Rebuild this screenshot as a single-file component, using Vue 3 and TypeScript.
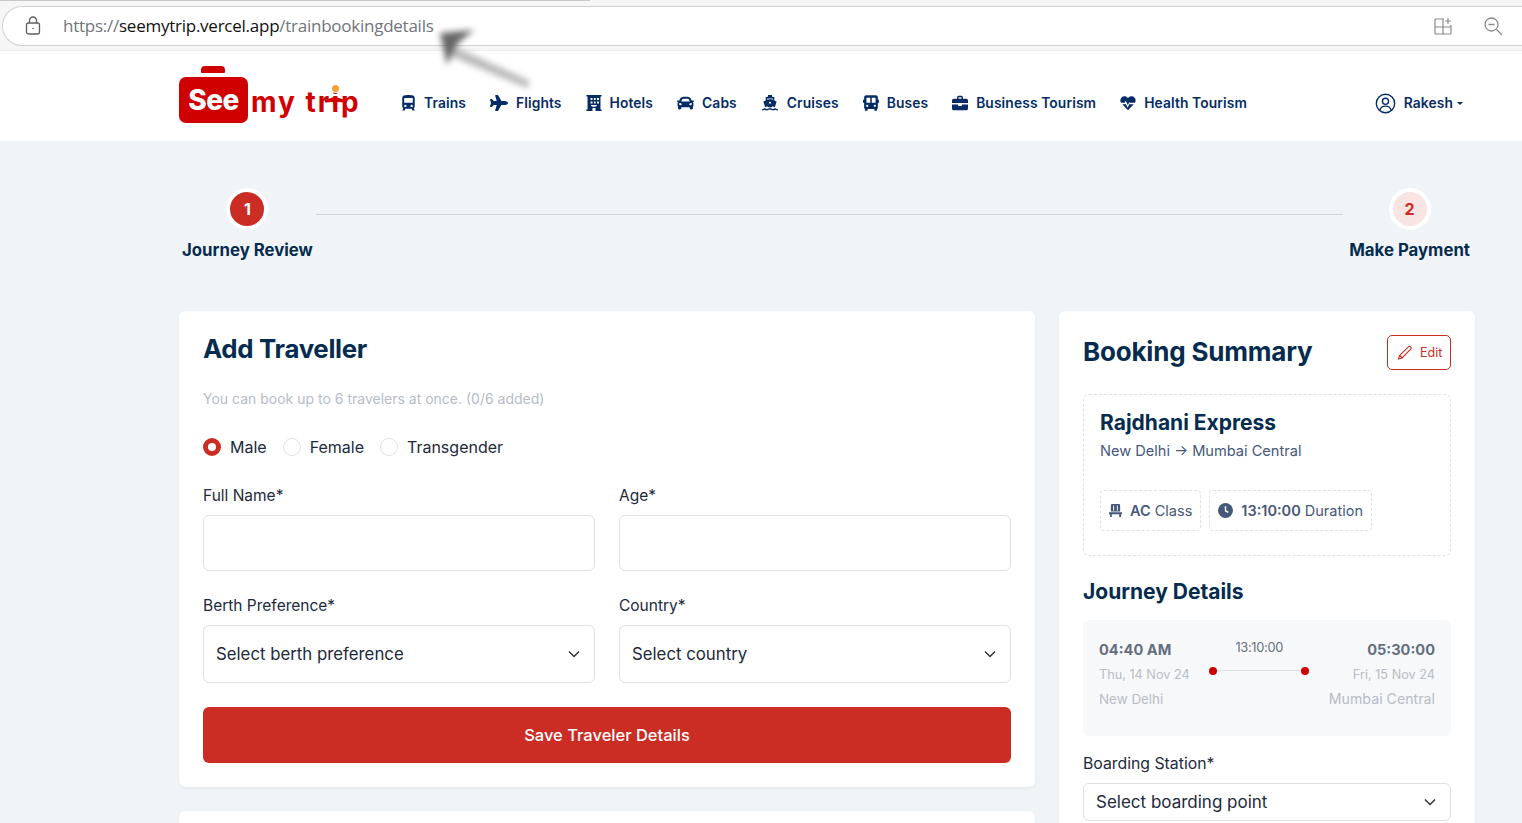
<script setup lang="ts">
interface NavItem { label: string; vb: string; w: number; d: string }
const nav: NavItem[] = [
  { label: 'Trains', vb: '3.500 2 17 20.500', w: 15, d: 'M12 2C7 2 4 2.800 4 6v10.500c0 1 .5 2 1.300 2.400L4 22h3l1-2.500h8l1 2.500h3l-1.300-3.100c.8-.4 1.300-1.400 1.300-2.400V6c0-3.200-3-4-8-4zM6.500 6h11v6h-11V6zM8 17.500a1.500 1.500 0 1 1 0-3 1.500 1.500 0 0 1 0 3zm8 0a1.500 1.500 0 1 1 0-3 1.500 1.500 0 0 1 0 3z' },
  { label: 'Flights', vb: '0 0 576 512', w: 18, d: 'M480 192H365.71L260.61 8.06A16.014 16.014 0 0 0 246.71 0h-65.5c-10.63 0-18.3 10.17-15.38 20.39L214.86 192H112l-43.2-57.6c-3.02-4.03-7.77-6.4-12.8-6.4H16.01C5.6 128-2.04 137.78.49 147.88L32 256 .49 364.12C-2.04 374.22 5.6 384 16.01 384H56c5.04 0 9.78-2.37 12.8-6.4L112 320h102.86l-49.03 171.6c-2.92 10.22 4.75 20.4 15.38 20.4h65.5c5.74 0 11.04-3.08 13.89-8.06L365.71 320H480c35.35 0 96-28.65 96-64s-60.65-64-96-64z' },
  { label: 'Hotels', vb: '2 2 20 21', w: 16, d: 'M2 2h20v2h-1.500v17H22v2h-8v-4h-4v4H2v-2h1.500V4H2V2zm5.500 4v2.500H10V6H7.500zm4.300 0v2.500h2.400V6h-2.400zM16 6v2.500h2.500V6H16zM7.500 10.500V13H10v-2.500H7.500zm4.300 0V13h2.400v-2.500h-2.400zm4.200 0V13h2.500v-2.500H16zM8 15c.5 2 2 2.500 4 2.500s3.500-.5 4-2.500H8z' },
  { label: 'Cabs', vb: '0 40 512 430', w: 17, d: 'M499.99 176h-59.87l-16.64-41.6C406.38 91.63 365.57 64 319.5 64h-127c-46.06 0-86.88 27.63-103.99 70.4L71.87 176H12.01C4.2 176-1.53 183.34.37 190.91l6 24C7.7 220.25 12.5 224 18.01 224h20.07C24.65 235.73 16 252.78 16 272v48c0 16.12 6.16 30.67 16 41.93V416c0 17.67 14.33 32 32 32h32c17.67 0 32-14.33 32-32v-32h256v32c0 17.67 14.33 32 32 32h32c17.67 0 32-14.33 32-32v-54.07c9.84-11.25 16-25.8 16-41.93v-48c0-19.22-8.65-36.27-22.07-48H494c5.51 0 10.31-3.75 11.64-9.09l6-24c1.89-7.57-3.84-14.91-11.65-14.91zm-352.06-17.83c7.29-18.22 24.94-30.17 44.57-30.17h127c19.63 0 37.28 11.95 44.57 30.17L384 208H128l19.93-49.83zM96 319.8c-19.2 0-32-12.76-32-31.9S76.8 256 96 256s48 28.71 48 47.85-28.8 15.95-48 15.95zm320 0c-19.2 0-48 3.19-48-15.95S396.8 256 416 256s32 12.76 32 31.9-12.8 31.9-32 31.9z' },
  { label: 'Cruises', vb: '2 1 20 20.500', w: 18, d: 'M9.500 1h5l.5 2.500h2.500V8l3 1.200-2.200 7.300c-1 .2-1.900-.2-2.800-1-1.200 1-2.500 1.500-3.500 1.500s-2.300-.5-3.500-1.500c-.9.800-1.800 1.200-2.800 1L3.500 9.200l3-1.200V3.500H9l.5-2.500zM8.500 5.500v1.700L12 6l3.500 1.200V5.500h-7zM12 9.500a1.300 1.300 0 1 0 0 2.600 1.300 1.300 0 0 0 0-2.600zM2 19c1.500 0 2.300-.5 3.300-1.300 1.800 1.600 3.800 1.600 5.300.4h2.800c1.500 1.200 3.500 1.200 5.300-.4 1 .8 1.800 1.300 3.300 1.300v2c-1.300 0-2.300-.4-3.300-1-1.800 1.200-3.500 1.200-5.300 0h-3c-1.800 1.200-3.500 1.200-5.300 0-1 .6-2 1-3.100 1v-2z' },
  { label: 'Buses', vb: '1.500 2 21 20.500', w: 16, d: 'M6 2h12c2 0 3 1 3 3v3h1.500v4H21v6c0 1-.5 1.600-1 2v2.500h-3.500V20h-9v2.500H4V20c-.5-.4-1-1-1-2v-6H1.500V8H3V5c0-2 1-3 3-3zm0 3.500V12h5V5.500H6zm7 0V12h5V5.500h-5zM7 17.500a1.500 1.500 0 1 0 0-3 1.500 1.500 0 0 0 0 3zm10 0a1.500 1.500 0 1 0 0-3 1.500 1.500 0 0 0 0 3z' },
  { label: 'Business Tourism', vb: '1 2 22 20', w: 16, d: 'M8 6V4c0-1.100.9-2 2-2h4c1.100 0 2 .9 2 2v2h4.500c1.400 0 2.500 1.100 2.500 2.500V12H1V8.500C1 7.100 2.100 6 3.500 6H8zm2 0h4V4h-4v2zM1 14h8.500v2h5v-2H23v5.500c0 1.400-1.100 2.500-2.500 2.500h-17C2.100 22 1 20.900 1 19.500V14z' },
  { label: 'Health Tourism', vb: '.5 2 23 20.500', w: 16, d: 'M12 5.500C9.500 1.800 5 2 2.800 4.200.6 6.400.5 9.700 2 12h5.200l1.500-3 3 6 2.300-4 .8 1H22c1.500-2.300 1.400-5.600-.8-7.800C19 2 14.500 1.800 12 5.500zM3.800 14 12 22.500l8.200-8.500h-6.100l-.3-.4L11.600 19 8.700 13.300 8.400 14H3.800z' }
]
</script>

<template>
  <div class="root">
    <header class="chrome">
      <div class="tab-edge"></div>
      <div class="urlbar">
        <svg class="lock" viewBox="0 0 18 20" width="18" height="20" fill="none" stroke="#5f5f5f" stroke-width="1.300">
          <rect x="2.500" y="7" width="13" height="11" rx="2" />
          <path d="M5.500 7V4.500a3.500 3.500 0 0 1 7 0V7" />
          <circle cx="9" cy="12.500" r=".8" fill="#5f5f5f" stroke="none" />
        </svg>
        <div class="url"><span class="dim">https://</span><span class="host">seemytrip.vercel.app</span><span class="dim">/trainbookingdetails</span></div>
        <svg class="tool one" viewBox="0 0 20 20" width="20" height="20" fill="none" stroke="#8a8a8a" stroke-width="1.200">
          <path d="M11 3H3a1 1 0 0 0-1 1v13a1 1 0 0 0 1 1h14a1 1 0 0 0 1-1V9" />
          <path d="M10 3v15M2 11h16M15 2v6M12 5h6" />
        </svg>
        <svg class="tool" viewBox="0 0 20 20" width="20" height="20" fill="none" stroke="#8a8a8a" stroke-width="1.300">
          <circle cx="8.500" cy="8.500" r="6.500" />
          <path d="M13.500 13.500 19 19M5.500 8.500h6" />
        </svg>
      </div>
    </header>

    <svg class="smudge" width="110" height="80" viewBox="0 0 110 80">
      <defs><filter id="blur" x="-20%" y="-20%" width="140%" height="140%"><feGaussianBlur stdDeviation="3" /></filter></defs>
      <g filter="url(#blur)">
        <path d="M14 22 L98 60 L95 67 L14 33 Z" fill="#b8b8b8" />
        <path d="M8 12 L42 9 L26 22 L15 44 Z" fill="#666" />
      </g>
    </svg>

    <nav class="topnav">
      <div class="logo">
        <div class="case">
          <span class="handle"></span>
          <span class="see">See</span>
        </div>
        <span class="mytrip">my tr<span class="i">i<b></b><svg class="wing" viewBox="0 0 20 10" width="20" height="10" fill="#d10000"><path d="M0 4 9 1h2l9 3v2.500L12 6l-1 4H9L8 6 0 6.500z" /></svg></span>p</span>
      </div>
      <ul class="links">
        <li v-for="n in nav" :key="n.label">
          <svg :viewBox="n.vb" :width="n.w" height="16" fill="#052c65"><path :d="n.d" /></svg>
          <span>{{ n.label }}</span>
        </li>
      </ul>
      <div class="user">
        <svg viewBox="0 0 24 24" width="21" height="21" fill="none" stroke="#052c65" stroke-width="1.600">
          <circle cx="12" cy="12" r="10.500" />
          <circle cx="12" cy="9.500" r="3.500" />
          <path d="M5.500 19.500c1-3 3.500-4.500 6.500-4.500s5.500 1.500 6.500 4.500" />
        </svg>
        <span>Rakesh</span>
        <i class="caret"></i>
      </div>
    </nav>

    <main class="page">
      <section class="stepper">
        <div class="step">
          <div class="num active">1</div>
          <div class="step-label">Journey Review</div>
        </div>
        <div class="rule"></div>
        <div class="step">
          <div class="num pending">2</div>
          <div class="step-label">Make Payment</div>
        </div>
      </section>

      <div class="columns">
        <div class="left">
          <section class="card form">
            <h2>Add Traveller</h2>
            <p class="hint">You can book up to 6 travelers at once. (0/6 added)</p>
            <div class="radios">
              <label><span class="radio on"></span>Male</label>
              <label><span class="radio"></span>Female</label>
              <label><span class="radio"></span>Transgender</label>
            </div>
            <div class="grid">
              <div class="field">
                <label>Full Name*</label>
                <div class="box tall"></div>
              </div>
              <div class="field">
                <label>Age*</label>
                <div class="box tall"></div>
              </div>
              <div class="field">
                <label>Berth Preference*</label>
                <div class="box sel">
                  <span>Select berth preference</span>
                  <svg viewBox="0 0 12 8" width="12" height="8" fill="none" stroke="#333" stroke-width="1.500"><path d="m1 1.500 5 5 5-5" /></svg>
                </div>
              </div>
              <div class="field">
                <label>Country*</label>
                <div class="box sel">
                  <span>Select country</span>
                  <svg viewBox="0 0 12 8" width="12" height="8" fill="none" stroke="#333" stroke-width="1.500"><path d="m1 1.500 5 5 5-5" /></svg>
                </div>
              </div>
            </div>
            <button class="save" type="button">Save Traveler Details</button>
          </section>
          <section class="card next"></section>
        </div>

        <aside class="card summary">
          <div class="sum-head">
            <h2>Booking Summary</h2>
            <button class="edit" type="button">
              <svg viewBox="0 0 16 16" width="16" height="16" fill="none" stroke="#cb2c23" stroke-width="1.100">
                <path d="M11.300 1.800a1.700 1.700 0 0 1 2.400 2.400L5 13l-3.500 1 1-3.500 8.800-8.700z" />
                <path d="m2.500 10.500 3 2.500" />
              </svg>
              <span>Edit</span>
            </button>
          </div>
          <div class="train">
            <h3>Rajdhani Express</h3>
            <p class="route">New Delhi → Mumbai Central</p>
            <div class="chips">
              <div class="chip">
                <svg viewBox="1 1 14 14" width="13" height="15" fill="#46587a"><path d="M4.500 1h7a1.500 1.500 0 0 1 1.500 1.500V9H3V2.500A1.500 1.500 0 0 1 4.500 1zM5.500 2.500V8h1V2.500h-1zm4 0V8h1V2.500h-1zM1 10h14v2h-1v3h-2v-3H4v3H2v-3H1v-2z" /></svg>
                <span><b>AC</b> Class</span>
              </div>
              <div class="chip">
                <svg viewBox="0 0 16 16" width="15" height="15"><circle cx="8" cy="8" r="8" fill="#46587a" /><path d="M8 3.500V8.300l3 1.800" fill="none" stroke="#fff" stroke-width="1.500" /></svg>
                <span><b>13:10:00</b> Duration</span>
              </div>
            </div>
          </div>
          <h3 class="jd">Journey Details</h3>
          <div class="times">
            <div class="end">
              <strong>04:40 AM</strong>
              <small>Thu, 14 Nov 24</small>
              <small class="place">New Delhi</small>
            </div>
            <div class="track">
              <span class="dur">13:10:00</span>
              <div class="line"><i></i><i></i></div>
            </div>
            <div class="end right">
              <strong>05:30:00</strong>
              <small>Fri, 15 Nov 24</small>
              <small class="place">Mumbai Central</small>
            </div>
          </div>
          <div class="field board">
            <label>Boarding Station*</label>
            <div class="box sel short">
              <span>Select boarding point</span>
              <svg viewBox="0 0 12 8" width="12" height="8" fill="none" stroke="#333" stroke-width="1.500"><path d="m1 1.500 5 5 5-5" /></svg>
            </div>
          </div>
        </aside>
      </div>
    </main>
  </div>
</template>

<style>
html, body { margin: 0; overflow: hidden; }
</style>

<style scoped>
.root {
  position: relative;
  height: 823px;
  width: 1522px;
  overflow: hidden;
  background: #f1f4f7;
  font-family: Inter, "Open Sans", sans-serif;
  color: #222;
}
.chrome { height: 51px; box-sizing: border-box; background: #f6f6f6; border-bottom: 1px solid #f0f0f0; position: relative; padding-top: 6px; }
.tab-edge { position: absolute; top: 0; left: 0; width: 590px; height: 1px; background: #c9c9c9; }
.urlbar {
  height: 40px;
  box-sizing: border-box;
  margin-left: 2px;
  background: #fff;
  border: 1px solid #d0d0d0;
  border-right: 0;
  border-radius: 20px 0 0 20px;
  display: flex;
  align-items: center;
  padding-left: 21px;
}
.url { margin-left: 21px; font-family: "Open Sans", sans-serif; font-size: 17px; letter-spacing: -.25px; flex: 1; white-space: nowrap; margin-top: -1px; }
.dim { color: #71757a; }
.host { color: #111; }
.tool { margin-right: 19px; }
.tool.one { margin-right: 30px; }
.smudge { position: absolute; left: 432px; top: 21px; z-index: 3; }

.topnav { height: 90px; background: #fff; display: flex; align-items: center; padding-left: 179px; box-sizing: border-box; }
.logo { display: flex; align-items: flex-end; width: 222px; height: 57px; margin-top: -4px; flex-shrink: 0; }
.case { position: relative; width: 69px; height: 46px; background: #d10000; border-radius: 7px; display: flex; align-items: center; justify-content: center; }
.handle { position: absolute; left: 22px; top: -11px; width: 24px; height: 7px; border-radius: 4px 4px 1px 1px; background: #d10000; }
.see { color: #fff; font: 800 28px/1 Inter, sans-serif; letter-spacing: -.5px; }
.mytrip { color: #d10000; font: 700 28px/1 Inter, sans-serif; margin: 0 0 7px 3px; white-space: nowrap; letter-spacing: 2px; }
.i { position: relative; }
.i b { position: absolute; left: 1px; top: 0; width: 7px; height: 7px; border-radius: 50%; background: #f6a234; box-shadow: 0 0 0 1px #fff; }
.wing { position: absolute; left: -6px; top: 11px; }
.links { list-style: none; margin: 14px 0 0 0; padding: 0; display: flex; gap: 24px; flex: 1; }
.links li { display: flex; align-items: center; gap: 8px; font-size: 13.800px; font-weight: 600; color: #052c65; white-space: nowrap; letter-spacing: .12px; }
.user { display: flex; align-items: center; gap: 8px; font-size: 13.800px; font-weight: 600; color: #052c65; margin: 14px 59px 0 0; letter-spacing: .1px; }
.caret { margin-left: -4px; border: 3px solid transparent; border-top-color: #052c65; border-bottom: 0; }

.page { padding: 47px 47px 0 179px; }
.stepper { display: flex; align-items: flex-start; margin-right: 5px; height: 123px; }
.step { display: flex; flex-direction: column; align-items: center; gap: 10px; margin-left: 3px; }
.num {
  width: 34px;
  height: 34px;
  border-radius: 50%;
  border: 4px solid #fff;
  display: flex;
  align-items: center;
  justify-content: center;
  font-weight: 700;
  font-size: 16px;
}
.num.active { background: #cb2c23; color: #fff; }
.num.pending { background: #f8e4e3; color: #cb2c23; }
.step-label { font-size: 16.800px; font-weight: 700; color: #052c4f; white-space: nowrap; }
.rule { flex: 1; height: 1px; background: #ced4da; margin: 26px 3px 0; }

.columns { display: flex; gap: 24px; align-items: flex-start; }
.left { width: 856px; flex-shrink: 0; display: flex; flex-direction: column; gap: 24px; }
.card { background: #fff; border-radius: 6px; box-shadow: 0 1px 3px rgba(0, 0, 0, .06); box-sizing: border-box; }
.form { padding: 24px; height: 476px; }
.form h2 { margin: 0; font-size: 25.800px; line-height: 28px; font-weight: 700; color: #052c4f; letter-spacing: -.3px; }
.hint { margin: 26px 0 0; font-size: 14px; line-height: 20px; color: #b7bcc6; }
.radios { display: flex; gap: 16px; margin-top: 28px; height: 20px; align-items: center; }
.radios label { display: flex; align-items: center; gap: 9px; font-size: 16px; color: #212a3a; }
.radio { width: 18px; height: 18px; border-radius: 50%; border: 1px solid #dee2e6; box-sizing: border-box; background: #fff; }
.radio.on { border: 5px solid #cb2c23; }
.grid { display: grid; grid-template-columns: 392px 392px; gap: 24px; margin-top: 28px; }
.field label { display: block; font-size: 15.500px; line-height: 21px; color: #212a3a; margin-bottom: 9px; }
.box { border: 1px solid #dee2e6; border-radius: 6px; background: #fff; box-sizing: border-box; height: 58px; }
.box.tall { height: 56px; }
.sel { display: flex; align-items: center; justify-content: space-between; padding: 0 14px 0 12px; font-size: 16.800px; color: #212a3a; }
.save {
  display: block;
  width: 100%;
  height: 56px;
  margin-top: 24px;
  background: #cb2c23;
  color: #fff;
  border: 0;
  border-radius: 6px;
  font: 500 16.500px Inter, sans-serif;
}
.next { height: 60px; }

.summary { width: 416px; height: 560px; padding: 24px; flex-shrink: 0; }
.sum-head { display: flex; justify-content: space-between; align-items: center; height: 35px; }
.sum-head h2 { margin: -2px 0 0; font-size: 26px; font-weight: 700; color: #052c4f; letter-spacing: -.2px; }
.edit {
  display: flex;
  align-items: center;
  gap: 7px;
  width: 64px;
  height: 35px;
  padding: 0 0 0 9px;
  background: #fff;
  border: 1px solid #cb2c23;
  border-radius: 5px;
  color: #cb2c23;
  font: 400 12.500px Inter, sans-serif;
}
.train { margin-top: 24px; height: 162px; box-sizing: border-box; border: 1px dashed #dee2e6; border-radius: 6px; padding: 15px 16px; }
.train h3 { margin: 0; font-size: 21px; line-height: 26px; font-weight: 700; color: #052c4f; }
.route { margin: 5px 0 0; font-size: 14.600px; line-height: 20px; color: #46587a; }
.chips { display: flex; gap: 8px; margin-top: 29px; }
.chip { display: flex; align-items: center; gap: 8px; height: 41px; box-sizing: border-box; border: 1px dashed #dee2e6; border-radius: 4px; padding: 0 8px; font-size: 14.500px; color: #46587a; white-space: nowrap; }
.chip b { font-weight: 600; }
.jd { margin: 23px 0 0; font-size: 21px; line-height: 26px; font-weight: 700; color: #052c4f; }
.times { margin-top: 15px; height: 116px; background: #f7f8fa; border-radius: 6px; padding: 17px 16px 16px; box-sizing: border-box; display: flex; justify-content: space-between; }
.end { display: flex; flex-direction: column; }
.end.right { align-items: flex-end; }
.end strong { font-size: 14.600px; line-height: 26px; font-weight: 700; color: #646f80; }
.end small { font-size: 12.700px; line-height: 24px; color: #b8bdc6; white-space: nowrap; }
.end small.place { font-size: 13.400px; }
.end.right small.place { font-size: 14.200px; }
.track { width: 96px; display: flex; flex-direction: column; align-items: center; padding-top: 1px; }
.dur { font-size: 12.800px; line-height: 20px; color: #646f80; letter-spacing: -.3px; }
.line { position: relative; margin-top: 12px; width: 92px; height: 1px; background: #dee2e6; display: flex; justify-content: space-between; align-items: center; }
.line i { width: 8px; height: 8px; border-radius: 50%; background: #d10000; margin: 0 -4px; }
.board { margin-top: 17px; }
.board label { font-size: 15.800px; }
.box.short { height: 38px; font-size: 17px; }
</style>
